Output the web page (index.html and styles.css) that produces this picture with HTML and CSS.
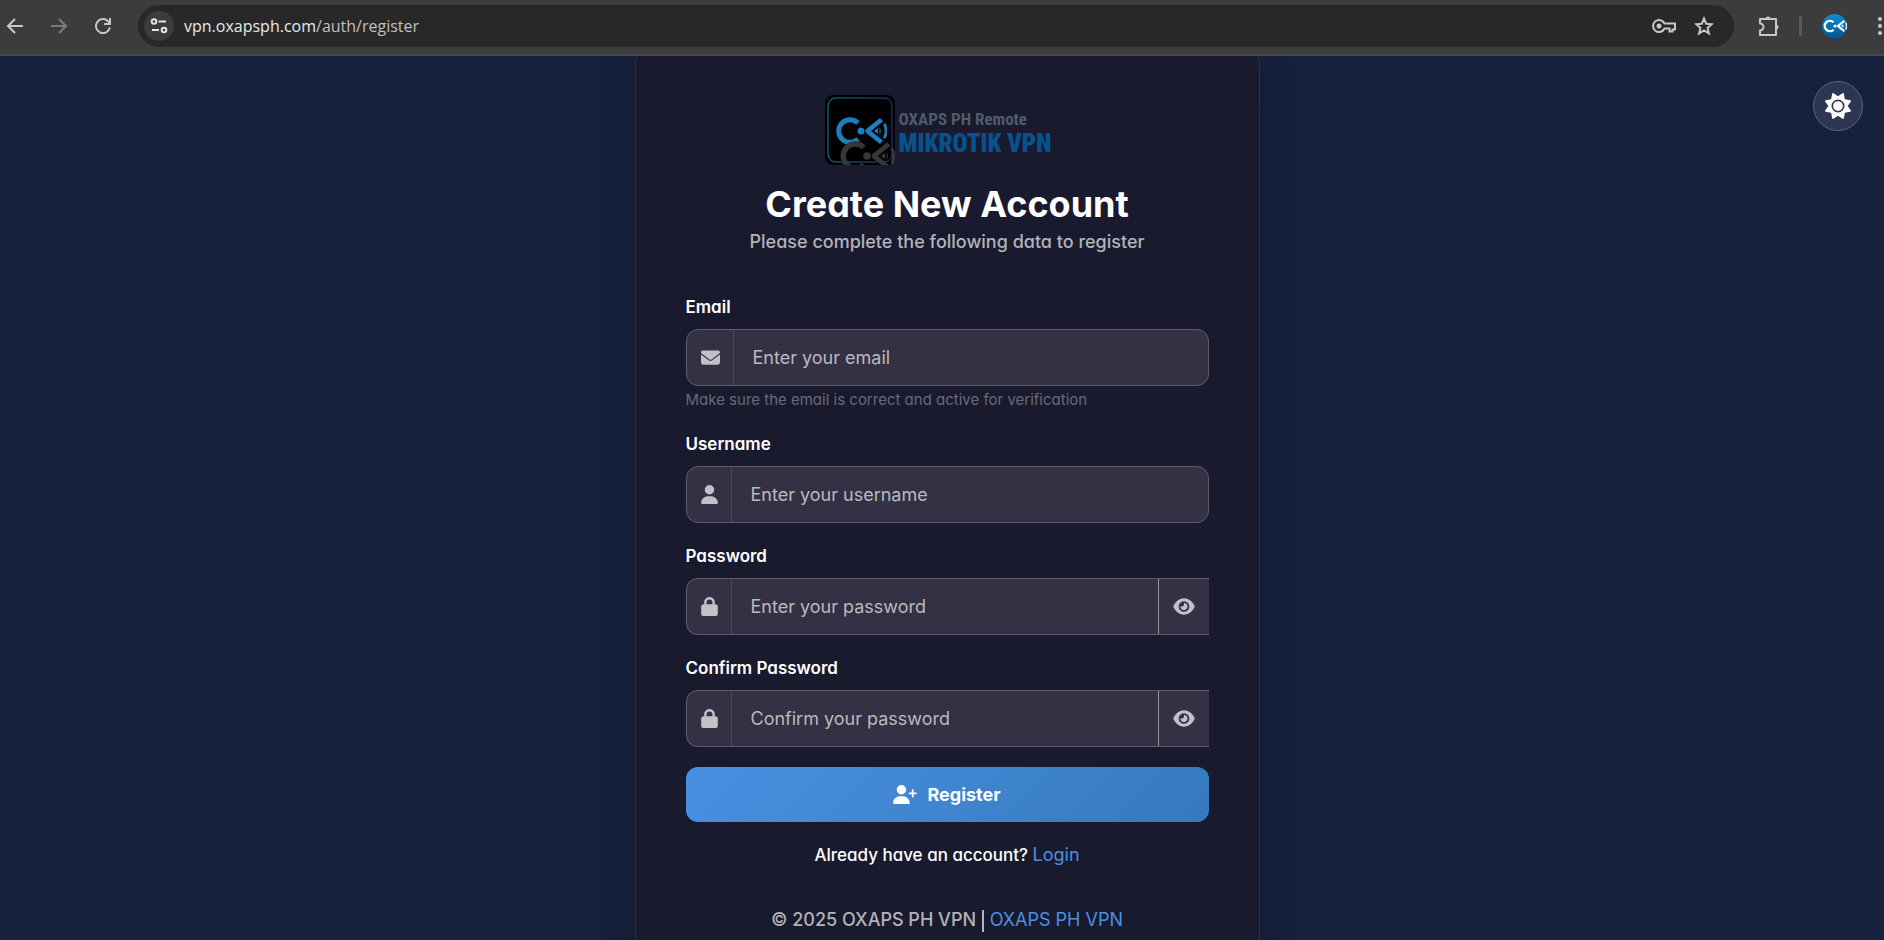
FILE: index.html
```
<!DOCTYPE html>
<html lang="en">
  <head>
    <meta charset="UTF-8" />
    <meta name="viewport" content="width=device-width, initial-scale=1.0" />
    <title>Create New Account</title>
    <link rel="stylesheet" href="styles.css">
  </head>
  <body>
    <!-- shared shapes -->
    <svg class="defs" width="0" height="0" aria-hidden="true">
      <defs>
        <linearGradient id="logo-frame" x1="0" y1="0" x2="1" y2="0">
          <stop offset="0" stop-color="#0a86a4" />
          <stop offset="1" stop-color="#2b3f8c" />
        </linearGradient>
        <symbol id="mark" viewBox="0 0 52 30">
          <path d="M23 7A11.300 11.300 0 1 0 23 23" fill="none" stroke="currentColor" stroke-width="5" />
          <circle cx="26" cy="15" r="3.500" fill="currentColor" />
          <path d="M30.500 13.500L45 2l3 3.500L36 15l12 9.500-3 3.500L30.500 16.500z" fill="currentColor" />
          <path d="M39 15l4-3v6zM44.500 11a8 8 0 0 1 0 8M48 8.500l2.500-1.500a18 18 0 0 1 0 16L48 21.500a14 14 0 0 0 0-13z" fill="currentColor" />
        </symbol>
        <symbol id="lock" viewBox="0 0 448 512">
          <path fill="currentColor" d="M144 144v48h160v-48c0-44.200-35.800-80-80-80s-80 35.800-80 80zm-64 48v-48C80 64.500 144.500 0 224 0s144 64.500 144 144v48h16c35.300 0 64 28.700 64 64v192c0 35.300-28.700 64-64 64H64c-35.300 0-64-28.700-64-64V256c0-35.300 28.700-64 64-64h16z" />
        </symbol>
        <symbol id="eye" viewBox="0 0 576 512">
          <path fill="currentColor" d="M288 32c-80.800 0-145.500 36.800-192.600 80.600C48.600 156 17.300 208 2.500 243.700c-3.300 7.900-3.300 16.700 0 24.600C17.300 304 48.600 356 95.400 399.400 142.500 443.200 207.200 480 288 480s145.500-36.800 192.600-80.600c46.800-43.500 78.100-95.400 93-131.100 3.300-7.900 3.300-16.700 0-24.600-14.900-35.700-46.200-87.700-93-131.100C433.500 68.800 368.800 32 288 32zM144 256a144 144 0 1 1 288 0 144 144 0 1 1-288 0zm144-64c0 35.300-28.700 64-64 64-7.100 0-13.900-1.200-20.300-3.300-5.500-1.800-11.900 1.600-11.700 7.400.3 6.900 1.300 13.800 3.200 20.700 13.700 51.200 66.400 81.600 117.600 67.900s81.600-66.400 67.900-117.600c-11.100-41.500-47.800-69.400-88.600-71.100-5.800-.2-9.200 6.100-7.400 11.700 2.100 6.400 3.300 13.200 3.300 20.300z" />
        </symbol>
      </defs>
    </svg>

    <header class="browser-bar">
      <button class="nav-btn" type="button" aria-label="Back">
        <svg width="18" height="18" viewBox="0 0 18 18"><path d="M17 9H2M9 2L2 9l7 7" fill="none" stroke="currentColor" stroke-width="2" /></svg>
      </button>
      <button class="nav-btn nav-btn-off" type="button" aria-label="Forward">
        <svg width="18" height="18" viewBox="0 0 18 18"><path d="M1 9h15M9 2l7 7-7 7" fill="none" stroke="currentColor" stroke-width="2" /></svg>
      </button>
      <button class="nav-btn" type="button" aria-label="Reload">
        <svg width="18" height="18" viewBox="0 0 18 18"><path d="M15.800 10.500A7 7 0 1 1 14 4.200L16 6M16 1v6h-6" fill="none" stroke="currentColor" stroke-width="2" /></svg>
      </button>
      <div class="address">
        <button class="site-info" type="button" aria-label="Site information">
          <svg width="18" height="18" viewBox="0 0 18 18"><g fill="none" stroke="currentColor" stroke-width="2"><circle cx="4" cy="4.500" r="2.300" /><path d="M8.500 4.500H16M2 13h7" /><circle cx="14" cy="13" r="2.300" /></g></svg>
        </button>
        <span class="url">vpn.oxapsph.com<span class="url-path">/auth/register</span></span>
        <button class="nav-btn" type="button" aria-label="Passwords">
          <svg width="24" height="16" viewBox="0 0 24 16"><path d="M12.500 5.500H23v6h-2.500v2h-3v-3h-5a6 6 0 1 1 0-5z" fill="none" stroke="currentColor" stroke-width="2" /><circle cx="7" cy="8" r="2.500" fill="currentColor" /></svg>
        </button>
        <button class="nav-btn" type="button" aria-label="Bookmark">
          <svg width="20" height="20" viewBox="0 0 20 20"><path d="M10 2.500l2.200 5.200 5.600.5-4.200 3.700 1.300 5.500-4.900-2.900-4.900 2.900 1.300-5.500-4.200-3.700 5.600-.5z" fill="none" stroke="currentColor" stroke-width="2" /></svg>
        </button>
      </div>
      <button class="nav-btn extensions" type="button" aria-label="Extensions">
        <svg width="22" height="22" viewBox="0 0 22 22"><path d="M2 4h16v16H2v-4.500a3.500 3.500 0 0 0 0-7z" fill="none" stroke="currentColor" stroke-width="2" stroke-linejoin="round" /><path d="M7.500 4a2.500 2.500 0 0 1 5 0zM18 9.500a2.500 2.500 0 0 1 0 5z" fill="currentColor" /></svg>
      </button>
      <span class="separator"></span>
      <button class="profile" type="button" aria-label="Profile">
        <svg width="24" height="14"><use href="#mark" /></svg>
      </button>
      <button class="nav-btn menu" type="button" aria-label="Menu">
        <svg width="4" height="18" viewBox="0 0 4 18"><g fill="currentColor"><circle cx="2" cy="2" r="2" /><circle cx="2" cy="9" r="2" /><circle cx="2" cy="16" r="2" /></g></svg>
      </button>
    </header>

    <main class="page">
      <button class="theme-toggle" type="button" aria-label="Toggle theme">
        <svg width="26" height="26" viewBox="0 0 512 512"><path fill="currentColor" d="M361.500 1.200c5 2.100 8.600 6.600 9.600 11.900L391 121l107.900 19.800c5.300 1 9.800 4.600 11.900 9.600s1.500 10.700-1.600 15.200L446.900 256l62.300 90.300c3.100 4.500 3.700 10.200 1.600 15.200s-6.600 8.600-11.900 9.600L391 391l-19.900 107.900c-1 5.300-4.600 9.800-9.600 11.900s-10.700 1.500-15.200-1.600L256 446.900l-90.300 62.300c-4.500 3.100-10.200 3.700-15.200 1.600s-8.600-6.600-9.600-11.900L121 391 13.100 371.100c-5.300-1-9.800-4.600-11.900-9.600s-1.500-10.700 1.600-15.200L65.100 256 2.800 165.700c-3.100-4.500-3.700-10.200-1.600-15.200s6.600-8.600 11.900-9.600L121 121l19.900-107.900c1-5.300 4.600-9.800 9.600-11.900s10.700-1.500 15.200 1.600L256 65.100l90.300-62.300c4.500-3.100 10.200-3.700 15.200-1.600zM160 256a96 96 0 1 1 192 0 96 96 0 1 1-192 0zm224 0a128 128 0 1 0-256 0 128 128 0 1 0 256 0z" /></svg>
      </button>

      <section class="card">
        <div class="brand">
          <svg class="brand-icon" width="70" height="70" viewBox="0 0 70 70" aria-hidden="true">
            <rect width="70" height="70" rx="8" fill="#000" />
            <rect x="3" y="3" width="64" height="64" rx="8" fill="none" stroke="url(#logo-frame)" stroke-width="1" />
            <use href="#mark" x="10" y="21" width="52" height="30" color="#1b7ebd" />
            <use href="#mark" x="14" y="45" width="56" height="32" color="#34383d" />
          </svg>
          <div class="brand-text">
            <span class="brand-top">OXAPS PH Remote</span>
            <span class="brand-name">MIKROTIK VPN</span>
          </div>
        </div>
        <h1>Create New Account</h1>
        <p class="subtitle">Please complete the following data to register</p>

        <form method="POST" action="/auth/register">
          <div class="field">
            <label for="email">Email</label>
            <div class="input-group">
              <span class="addon">
                <svg width="19" height="19" viewBox="0 0 512 512"><path fill="currentColor" d="M48 64C21.500 64 0 85.500 0 112c0 15.100 7.100 29.300 19.200 38.400l217.600 163.200c11.400 8.500 27 8.500 38.400 0l217.600-163.200C504.900 141.300 512 127.100 512 112c0-26.500-21.500-48-48-48H48zM0 176v208c0 35.300 28.700 64 64 64h384c35.300 0 64-28.700 64-64V176L294.400 339.200c-22.800 17.100-54 17.100-76.800 0L0 176z" /></svg>
              </span>
              <input type="email" id="email" name="email" placeholder="Enter your email" />
            </div>
            <small class="hint">Make sure the email is correct and active for verification</small>
          </div>
          <div class="field">
            <label for="username">Username</label>
            <div class="input-group">
              <span class="addon">
                <svg width="17" height="19" viewBox="0 0 448 512"><path fill="currentColor" d="M224 256a128 128 0 1 0 0-256 128 128 0 1 0 0 256zm-45.700 48C79.800 304 0 383.800 0 482.300 0 498.700 13.300 512 29.700 512h388.600c16.400 0 29.700-13.300 29.700-29.700 0-98.500-79.800-178.300-178.300-178.300h-91.400z" /></svg>
              </span>
              <input type="text" id="username" name="username" placeholder="Enter your username" />
            </div>
          </div>
          <div class="field">
            <label for="password">Password</label>
            <div class="input-group with-toggle">
              <span class="addon"><svg width="17" height="19"><use href="#lock" /></svg></span>
              <input type="password" id="password" name="password" placeholder="Enter your password" />
              <button class="eye" type="button" aria-label="Show password"><svg width="22" height="19"><use href="#eye" /></svg></button>
            </div>
          </div>
          <div class="field">
            <label for="confirm">Confirm Password</label>
            <div class="input-group with-toggle">
              <span class="addon"><svg width="17" height="19"><use href="#lock" /></svg></span>
              <input type="password" id="confirm" name="confirm" placeholder="Confirm your password" />
              <button class="eye" type="button" aria-label="Show password"><svg width="22" height="19"><use href="#eye" /></svg></button>
            </div>
          </div>
          <button class="register" type="submit">
            <svg width="24" height="19" viewBox="0 0 640 512"><path fill="currentColor" d="M96 128a128 128 0 1 1 256 0 128 128 0 1 1-256 0zM0 482.300C0 383.800 79.800 304 178.300 304h91.400c98.500 0 178.300 79.800 178.300 178.300 0 16.400-13.300 29.700-29.700 29.700H29.700C13.300 512 0 498.700 0 482.300zM504 312v-64h-64c-13.300 0-24-10.700-24-24s10.700-24 24-24h64v-64c0-13.300 10.700-24 24-24s24 10.700 24 24v64h64c13.300 0 24 10.700 24 24s-10.700 24-24 24h-64v64c0 13.300-10.700 24-24 24s-24-10.700-24-24z" /></svg>
            Register
          </button>
        </form>

        <p class="login">Already have an account? <a href="#">Login</a></p>
        <p class="copyright">© 2025 OXAPS PH VPN <span class="bar"></span> <a href="#">OXAPS PH VPN</a></p>
      </section>
    </main>
  </body>
</html>
```

FILE: styles.css
```
* {
  box-sizing: border-box;
}

html,
body {
  height: 100%;
}

body {
  margin: 0;
  display: flex;
  flex-direction: column;
  overflow: hidden;
  background: #16213e;
  color: #ffffff;
  font-family: Inter, sans-serif;
  font-size: 18px;
  line-height: 25px;
  font-feature-settings: "cv03", "cv04", "cv11";
}

button {
  font-family: inherit;
  cursor: pointer;
}

a {
  color: #4a90e2;
  text-decoration: none;
  font-weight: 400;
}

.defs {
  position: absolute;
}

/* browser bar */
.browser-bar {
  flex: none;
  height: 56px;
  display: flex;
  align-items: center;
  padding: 0 0 2px 6px;
  background: #3c3c3c;
  border-bottom: 2px solid #474747;
  position: relative;
  z-index: 1;
}

.nav-btn {
  flex: none;
  display: flex;
  padding: 0;
  margin-right: 26px;
  border: 0;
  background: none;
  color: #c7c7c7;
}

.nav-btn-off {
  color: #7c7c7c;
}

.address {
  flex: 1;
  height: 42px;
  display: flex;
  align-items: center;
  padding: 0 20px 0 6px;
  margin-right: 24px;
  border-radius: 21px;
  background: #282828;
}

.address .nav-btn {
  margin: 0 0 0 18px;
}

.site-info {
  width: 30px;
  height: 30px;
  display: flex;
  align-items: center;
  justify-content: center;
  padding: 0;
  margin-right: 10px;
  border: 0;
  border-radius: 50%;
  background: #3c3c3c;
  color: #e3e3e3;
}

.url {
  flex: 1;
  font-family: "Open Sans", sans-serif;
  font-size: 16px;
  color: #e8e8e8;
}

.url-path {
  color: #c0c0c0;
}

.extensions {
  margin-right: 19px;
}

.separator {
  width: 3px;
  height: 20px;
  margin-right: 20px;
  border-radius: 2px;
  background: #5a5a5a;
}

.profile {
  width: 25px;
  height: 25px;
  display: flex;
  align-items: center;
  justify-content: center;
  padding: 0;
  border: 0;
  border-radius: 50%;
  background: linear-gradient(#0a8fd0, #07508f);
  color: #ffffff;
}

.menu {
  margin: 0 2px 0 31px;
}

/* page */
.page {
  flex: 1;
  min-height: 0;
  display: flex;
  justify-content: center;
  align-items: flex-start;
  padding-left: 10px;
  overflow: hidden;
  position: relative;
}

.theme-toggle {
  position: absolute;
  top: 25px;
  right: 21px;
  width: 50px;
  height: 50px;
  display: flex;
  align-items: center;
  justify-content: center;
  padding: 0;
  border: 1px solid #5c647a;
  border-radius: 50%;
  background: #2d3752;
  color: #ffffff;
}

.card {
  width: 625px;
  margin-top: -12px;
  padding: 50px;
  border: 1px solid #31313f;
  border-radius: 20px;
  background: #1a1a2e;
  box-shadow: 0 10px 40px rgba(0, 0, 0, 0.2);
}

.brand {
  display: flex;
  align-items: center;
  gap: 4px;
  padding-left: 139px;
}

.brand-text {
  display: flex;
  flex-direction: column;
  padding-top: 8px;
  font-family: "Roboto Condensed", "Open Sans Condensed", "Liberation Sans Narrow", sans-serif;
  font-weight: 700;
}

.brand-top {
  font-size: 17px;
  line-height: 20px;
  color: #4d5c6b;
}

.brand-name {
  font-size: 25px;
  line-height: 30px;
  font-weight: 900;
  color: #06528f;
}

h1 {
  margin: 17px 0 0;
  font-size: 36px;
  line-height: 44px;
  font-weight: 700;
  text-align: center;
}

.subtitle {
  margin: 3px 0 40px;
  color: #b3b3b9;
  font-weight: 500;
  text-align: center;
}

.field {
  margin-bottom: 20px;
}

label {
  display: block;
  padding-top: 1px;
  margin-bottom: 9px;
  font-size: 17px;
  font-weight: 600;
}

.input-group {
  height: 57px;
  display: flex;
  overflow: hidden;
  border: 1px solid #5d5c69;
  border-radius: 12px;
  background: #333143;
}

.with-toggle {
  border-right: 0;
  border-radius: 12px 0 0 12px;
}

.addon {
  display: flex;
  align-items: center;
  padding: 0 13px 0 14px;
  border-right: 1px solid #4b4a59;
  color: #c2c1c7;
}

.input-group input {
  flex: 1;
  min-width: 0;
  padding: 0 19px;
  border: 0;
  outline: 0;
  background: none;
  color: #ffffff;
  font-family: inherit;
  font-size: 18px;
}

.input-group input::placeholder {
  color: #bab9bf;
}

.eye {
  width: 51px;
  display: flex;
  align-items: center;
  justify-content: center;
  padding: 0;
  border: 0;
  border-left: 1px solid #96959d;
  background: none;
  color: #c2c1c7;
}

.hint {
  display: block;
  padding: 4px 0 1px;
  font-size: 15px;
  line-height: 20px;
  color: #666b7b;
}

.register {
  width: 100%;
  height: 55px;
  display: flex;
  align-items: center;
  justify-content: center;
  gap: 10px;
  border: 0;
  border-radius: 12px;
  background: linear-gradient(135deg, #4a90e2, #357abd);
  color: #ffffff;
  font-size: 18px;
  font-weight: 700;
}

.login {
  margin: 20px 0 39px;
  font-size: 17px;
  font-weight: 500;
  text-align: center;
}

.login a {
  font-size: 18px;
}

.copyright {
  margin: 0;
  color: #b3b3b9;
  font-weight: 500;
  text-align: center;
}

.bar {
  display: inline-block;
  width: 2px;
  height: 22px;
  margin: 0 1px;
  background: #b3b3b9;
  vertical-align: middle;
}
```
